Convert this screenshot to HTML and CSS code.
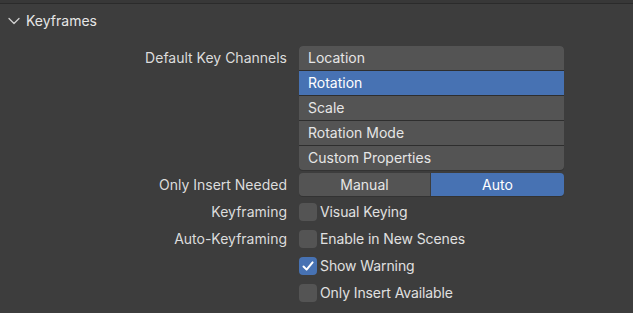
FILE: index.html
```html
<!DOCTYPE html>
<html lang="en">
  <head>
    <meta charset="UTF-8" />
    <title>Keyframes</title>
    <link rel="stylesheet" href="styles.css">
  </head>
  <body>
    <div class="top-strip"></div>

    <!-- panel header -->
    <div class="panel-header">
      <svg class="chevron" width="12" height="8" viewBox="0 0 12 8">
        <path d="M1 1.5 L6 6.5 L11 1.5" fill="none" stroke="#cfcfcf" stroke-width="1.3" stroke-linecap="round" stroke-linejoin="round" />
      </svg>
      <span class="panel-title">Keyframes</span>
    </div>

    <div class="props">
      <div class="prop-row">
        <div class="prop-label">Default Key Channels</div>
        <div class="list-box">
          <div class="list-item">Location</div>
          <div class="list-item selected">Rotation</div>
          <div class="list-item">Scale</div>
          <div class="list-item">Rotation Mode</div>
          <div class="list-item">Custom Properties</div>
        </div>
      </div>

      <div class="prop-row toggle-row">
        <div class="prop-label">Only Insert Needed</div>
        <div class="toggle">
          <div class="toggle-btn">Manual</div>
          <div class="toggle-btn active">Auto</div>
        </div>
      </div>

      <div class="prop-row check-row">
        <div class="prop-label">Keyframing</div>
        <label class="check"><span class="box"></span>Visual Keying</label>
      </div>
      <div class="prop-row check-row">
        <div class="prop-label">Auto-Keyframing</div>
        <label class="check"><span class="box"></span>Enable in New Scenes</label>
      </div>
      <div class="prop-row check-row">
        <div class="prop-label"></div>
        <label class="check">
          <span class="box checked">
            <svg width="18" height="18" viewBox="0 0 18 18">
              <path d="M4.5 9.5 L7.6 12.6 L13.6 5.4" fill="none" stroke="#ffffff" stroke-width="2" stroke-linecap="round" stroke-linejoin="round" />
            </svg>
          </span>Show Warning
        </label>
      </div>
      <div class="prop-row check-row">
        <div class="prop-label"></div>
        <label class="check"><span class="box"></span>Only Insert Available</label>
      </div>
    </div>
  </body>
</html>
```

FILE: styles.css
```css
body {
  margin: 0;
  background-color: #3d3d3d;
  font-family: "Inter", "Noto Sans", sans-serif;
  font-size: 14px;
  color: #e0e0e0;
  overflow: hidden;
}
.top-strip {
  height: 3px;
  background-color: #383838;
  border-bottom: 1px solid #2b2b2b;
}
.panel-header {
  height: 33px;
  display: flex;
  align-items: center;
  padding-left: 8px;
}
.chevron {
  margin-right: 6px;
  margin-top: 1px;
}
.panel-title {
  color: #e6e6e6;
  font-size: 14px;
}
.props {
  padding-top: 9px;
}
.prop-row {
  display: grid;
  grid-template-columns: 287px 265px;
  column-gap: 12px;
  align-items: center;
}
.prop-label {
  text-align: right;
  color: #dcdcdc;
  white-space: nowrap;
}
.list-box {
  border-radius: 4px;
  overflow: hidden;
  background-color: #2e2e2e;
  box-shadow: 0 1px 0 #333333;
}
.list-item {
  height: 24px;
  line-height: 24px;
  padding-left: 9px;
  background-color: #545454;
  color: #e6e6e6;
}
.list-item + .list-item {
  margin-top: 1px;
}
.list-item.selected {
  background-color: #4772b3;
  color: #ffffff;
}
.prop-row:first-child .prop-label {
  align-self: start;
  line-height: 24px;
}
.toggle-row {
  margin-top: 3px;
}
.toggle {
  display: flex;
  height: 23px;
  border-radius: 4px;
  overflow: hidden;
  box-shadow: 0 1px 0 #333333;
}
.toggle-btn {
  flex: 131px 0 0;
  line-height: 23px;
  text-align: center;
  background-color: #545454;
  color: #e6e6e6;
}
.toggle-btn.active {
  flex: 1;
  margin-left: 1px;
  background-color: #4772b3;
  color: #ffffff;
}
.check-row {
  height: 27px;
}
.toggle-row + .check-row {
  margin-top: 2px;
}
.check {
  display: flex;
  align-items: center;
  color: #e0e0e0;
  letter-spacing: -0.1px;
}
.box {
  width: 18px;
  height: 18px;
  border-radius: 4px;
  background-color: #545454;
  margin-right: 3px;
  display: block;
}
.box.checked {
  background-color: #4772b3;
}
.box svg {
  display: block;
}
```
